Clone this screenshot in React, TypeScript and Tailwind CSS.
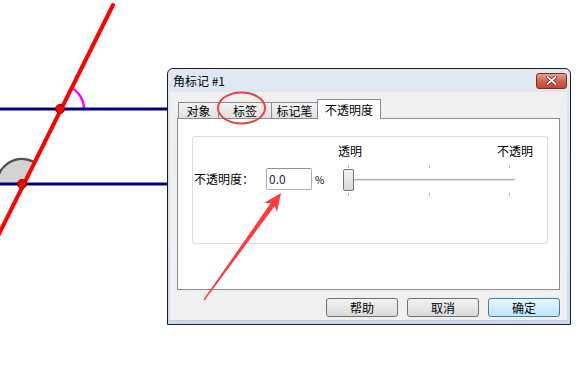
import React from 'react';

const tabs = [
  { label: '对象', w: 'w-[41px]' },
  { label: '标签', w: 'w-[54px]' },
  { label: '标记笔', w: 'w-[47px]' },
];

function Scene() {
  // the geometry sketch behind the dialog
  return (
    <svg className="absolute left-0 top-0" width="580" height="379" viewBox="0 0 580 379">
      <path d="M22 184 L33.2 161.6 A25 25 0 0 0 -3 184 Z" fill="#d3d3d3" />
      <path d="M33.2 161.6 A25 25 0 0 0 -3 184" fill="none" stroke="#505050" strokeWidth="2.5" />
      <path d="M84 109 A24 24 0 0 0 70.7 87.5" fill="none" stroke="#ff00ff" strokeWidth="2.5" />
      <line x1="0" y1="109" x2="170" y2="109" stroke="#00007f" strokeWidth="3" />
      <line x1="0" y1="184" x2="170" y2="184" stroke="#00007f" strokeWidth="3" />
      <line x1="113" y1="5" x2="-3" y2="238" stroke="#ff0000" strokeWidth="4" strokeLinecap="round" />
      <circle cx="60" cy="109" r="4.5" fill="#ff0000" stroke="#7a0000" strokeWidth="1" />
      <circle cx="22" cy="184" r="4.5" fill="#ff0000" stroke="#7a0000" strokeWidth="1" />
    </svg>
  );
}

function Marks() {
  // red annotation drawn over the screenshot
  return (
    <svg className="absolute left-0 top-0 pointer-events-none" width="580" height="379" viewBox="0 0 580 379">
      <ellipse cx="241.5" cy="108" rx="23.5" ry="15.5" fill="none" stroke="#e8403a" strokeWidth="2" />
      <polygon
        points="281,193 277,212.3 274.8,205.9 204.5,300.4 203.5,299.6 270.8,203 264,202.9"
        fill="#ff3b3b"
      />
    </svg>
  );
}

function Slider() {
  return (
    <div className="flex flex-col w-[194px]">
      <div className="flex justify-between h-[16px] leading-[16px] text-[12px] text-black">
        <span>透明</span>
        <span className="-mr-px">不透明</span>
      </div>
      <div className="mt-[6px] ml-[10px] w-[162px] h-[3px] flex justify-between">
        <div className="w-px h-full bg-[#b5b5b5]" />
        <div className="w-px h-full bg-[#b5b5b5]" />
        <div className="w-px h-full bg-[#b5b5b5]" />
      </div>
      <div className="mt-[1px] flex items-center h-[22px]">
        <div className="ml-[5px] w-[11px] h-[22px] rounded-[2px] border border-[#707070] bg-gradient-to-b from-[#f4f4f4] to-[#d8d8d8]" />
        <div className="w-[161px] flex flex-col">
          <div className="h-px bg-[#a9a9a9]" />
          <div className="h-px bg-[#e3e3e3]" />
        </div>
      </div>
      <div className="mt-[2px] ml-[10px] w-[162px] h-[3px] flex justify-between">
        <div className="w-px h-full bg-[#b5b5b5]" />
        <div className="w-px h-full bg-[#b5b5b5]" />
        <div className="w-px h-full bg-[#b5b5b5]" />
      </div>
    </div>
  );
}

function Btn({ label, primary }: { label: string; primary?: boolean }) {
  return (
    <button
      className={
        primary
          ? 'w-[72px] h-[19px] rounded-[3px] border border-[#3c7fb1] bg-gradient-to-b from-[#eaf6fd] to-[#bee6fd] text-[12px] leading-[17px] text-black'
          : 'w-[72px] h-[19px] rounded-[3px] border border-[#707070] bg-gradient-to-b from-[#f2f2f2] to-[#dadada] text-[12px] leading-[17px] text-black'
      }
    >
      {label}
    </button>
  );
}

export default function App() {
  return (
    <div className="relative w-[580px] h-[379px] overflow-hidden bg-white font-['Noto_Sans_CJK_SC',sans-serif]">
      <Scene />

      <div className="absolute left-[167px] top-[68px] w-[404px] h-[257px] flex flex-col border border-[#1c1c1c] rounded-t-[6px] bg-gradient-to-b from-[#dfe8f2] via-[#d6e2ee] to-[#cddbe9]">
        <div className="h-[23px] flex items-center justify-between pl-[5px] pr-[3px]">
          <span className="text-[12px] text-black">角标记 #1</span>
          <div className="w-[31px] h-[16px] rounded-[3px] border border-[#7a2e22] bg-gradient-to-b from-[#e8a093] via-[#d06350] to-[#c2432e] flex items-center justify-center">
            <svg width="11" height="9" viewBox="0 0 11 9">
              <path d="M1.5 1 L9.5 8 M9.5 1 L1.5 8" stroke="#5b1a10" strokeWidth="3.2" strokeLinecap="square" />
              <path d="M1.5 1 L9.5 8 M9.5 1 L1.5 8" stroke="#ffffff" strokeWidth="1.8" strokeLinecap="square" />
            </svg>
          </div>
        </div>

        <div className="flex-1 ml-[2px] mr-[3px] mb-[3px] bg-[#f0f0f0] flex flex-col pt-[7px] px-[7px] border-b border-[#b9d1ea]">
          <div className="flex items-end h-[19px] ml-[1px] text-[12px] text-black">
            {tabs.map((t) => (
              <div
                key={t.label}
                className={`${t.w} h-[16px] -mr-px border border-b-0 border-[#898c95] bg-gradient-to-b from-[#f3f3f3] to-[#e0e0e0] flex items-center justify-center leading-[14px]`}
              >
                {t.label}
              </div>
            ))}
            <div className="relative z-10 w-[64px] h-[20px] -mb-px border border-b-0 border-[#898c95] bg-white flex items-center justify-center leading-[14px]">
              不透明度
            </div>
          </div>

          <div className="h-[172px] border border-[#898c95] bg-white pl-[14px] pt-[17px]">
            <div className="w-[356px] h-[108px] rounded-[3px] border border-[#d5dfe5] pt-[6px] pl-[1px] flex items-start">
              <div className="flex items-center mt-[25px] h-[22px] text-[12px] text-black">
                <span className="w-[60px]">不透明度：</span>
                <div className="ml-[12px] w-[46px] h-[22px] rounded-[2px] border border-[#abadb3] border-t-[#8e8f8f] bg-white pl-[2px] flex items-center text-[#1b1b5a]">
                  0.0
                </div>
                <span className="ml-[3px] w-[23px] text-[10px]">%</span>
              </div>
              <Slider />
            </div>
          </div>

          <div className="flex justify-end gap-[9px] mt-[8px]">
            <Btn label="帮助" />
            <Btn label="取消" />
            <Btn label="确定" primary />
          </div>
        </div>
      </div>

      <Marks />
    </div>
  );
}
